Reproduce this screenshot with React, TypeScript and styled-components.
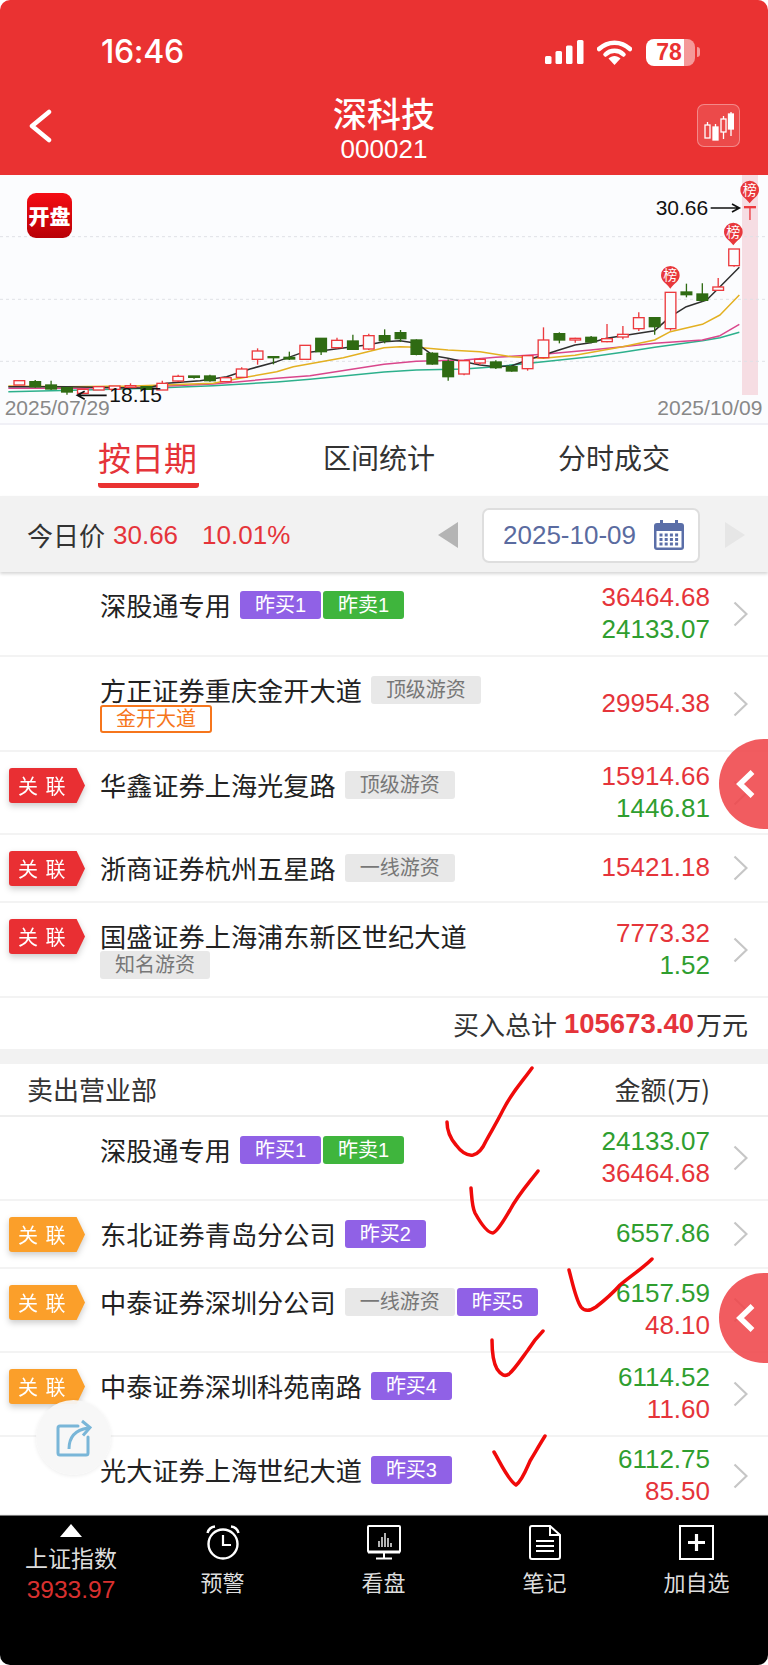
import React from "react";
import styled, { createGlobalStyle } from "styled-components";

const RED = "#e5343a";
const GREEN = "#2f9e2f";
const CJK = `"Noto Sans CJK SC", sans-serif`;
const MIX = `"Liberation Sans", "Noto Sans CJK SC", sans-serif`;

const Global = createGlobalStyle`
  html, body { margin: 0; padding: 0; background: #fff; }
  * { box-sizing: border-box; }
`;

const Page = styled.div`
  position: relative;
  width: 768px;
  height: 1665px;
  overflow: hidden;
  border-radius: 10px;
  display: flex;
  flex-direction: column;
  background: #fff;
  font-family: ${MIX};
  color: #222;
`;

const Header = styled.header`
  flex: none;
  height: 175px;
  background: #ea3232;
  color: #fff;
  position: relative;
  display: flex;
  flex-direction: column;
`;
const StatusBar = styled.div`
  height: 100px;
  padding: 35px 68px 0 101px;
  display: flex;
  align-items: flex-start;
`;
const Time = styled.div`
  font: 500 32px/34px Inter, sans-serif;
  letter-spacing: -0.3px;
  flex: 1;
`;
const StatusIcons = styled.div`
  display: flex;
  align-items: center;
  height: 34px;
`;
const WifiIcon = styled.svg`
  margin-left: 13px;
`;
const Battery = styled.div`
  width: 49px;
  height: 27px;
  margin-left: 14px;
  border-radius: 8px;
  background: linear-gradient(90deg, #fff 0 78%, rgba(255, 255, 255, 0.5) 78% 100%);
  color: #ea3232;
  font: 700 23px/27px "Liberation Sans", sans-serif;
  text-align: center;
  padding-right: 3px;
`;
const BatteryNub = styled.div`
  width: 3px;
  height: 10px;
  margin-left: 2px;
  border-radius: 0 3px 3px 0;
  background: rgba(255, 255, 255, 0.5);
`;
const NavBar = styled.div`
  flex: 1;
  display: grid;
  grid-template-columns: 100px 1fr 100px;
  align-items: start;
`;
const BackCell = styled.div`
  padding: 9px 0 0 28px;
`;
const TitleCell = styled.div`
  text-align: center;
  margin-top: -6px;
`;
const Title = styled.div`
  font: 500 34px/38px ${CJK};
`;
const Code = styled.div`
  font: 400 26px/30px "Liberation Sans", sans-serif;
  margin-top: 2px;
`;
const KButton = styled.div`
  width: 43px;
  height: 43px;
  margin: 4px 0 0 29px;
  border-radius: 7px;
  background: rgba(255, 255, 255, 0.12);
  border: 1px solid rgba(255, 255, 255, 0.35);
  display: flex;
  align-items: center;
  justify-content: center;
`;

const ChartBox = styled.section`
  position: relative;
  flex: none;
  height: 248px;
  background: #fbfcfe;
`;
const ChartSvg = styled.svg`
  display: block;
  width: 768px;
  height: 248px;
`;
const Logo = styled.div`
  position: absolute;
  left: 27px;
  top: 18px;
  width: 45px;
  height: 45px;
  border-radius: 9px;
  background: linear-gradient(180deg, #f50d14, #b80006);
  color: #fff;
  font: 900 21px/45px ${CJK};
  text-align: center;
`;

const Tabs = styled.nav`
  flex: none;
  height: 73px;
  border-top: 2px solid #f0f0f6;
  padding-left: 98px;
  display: grid;
  grid-template-columns: 225px 235px 1fr;
  background: #fff;
`;
const Tab = styled.div<{ $active?: boolean }>`
  justify-self: start;
  height: ${(p) => (p.$active ? 63 : 65)}px;
  padding-top: ${(p) => (p.$active ? 9 : 11)}px;
  font: 400 ${(p) => (p.$active ? 33 : 28)}px/${(p) => (p.$active ? 46 : 42)}px ${CJK};
  color: ${(p) => (p.$active ? RED : "#333")};
  border-bottom: ${(p) => (p.$active ? `5px solid #ea3232` : "0")};
  border-radius: 3px;
  width: ${(p) => (p.$active ? "101px" : "auto")};
`;

const DateBar = styled.div`
  position: relative;
  z-index: 2;
  flex: none;
  height: 76px;
  background: #f2f2f2;
  box-shadow: 0 2px 3px rgba(0, 0, 0, 0.16);
  display: flex;
  align-items: center;
  padding: 2px 23px 0 27px;
  font-size: 26px;
  color: #333;
`;
const TodayLabel = styled.span`
  font-family: ${CJK};
  line-height: 34px;
`;
const TodayValue = styled.span<{ $gap: number }>`
  color: ${RED};
  margin-left: ${(p) => p.$gap}px;
`;
const Spacer = styled.div`
  flex: 1;
`;
const DateBox = styled.div`
  width: 218px;
  height: 55px;
  margin: 0 25px 0 24px;
  background: #fff;
  border: 2px solid #dedede;
  border-radius: 7px;
  padding: 0 14px 0 19px;
  display: flex;
  align-items: center;
  justify-content: space-between;
  color: #5a6ba0;
`;

const Section = styled.section`
  flex: none;
  background: #fff;
`;
const Row = styled.div<{ $h: number }>`
  height: ${(p) => p.$h}px;
  padding: 0 20px 0 9px;
  border-bottom: 2px solid #f3f3f3;
  display: flex;
  align-items: stretch;
  background: #fff;
`;
const RowMain = styled.div`
  flex: none;
  width: 561px;
  padding-top: 18px;
  display: flex;
  align-items: flex-start;
`;
const BadgeSlot = styled.div`
  flex: none;
  width: 91px;
  height: 30px;
  filter: drop-shadow(0 3px 3px rgba(0, 0, 0, 0.2));
`;
const Badge = styled.div<{ $kind: "red" | "orange" }>`
  width: 76px;
  height: 35px;
  margin-top: -2px;
  padding-left: 9px;
  border-radius: 3px 0 0 3px;
  clip-path: polygon(0 0, 89% 0, 100% 50%, 89% 100%, 0 100%);
  background: ${(p) => (p.$kind === "red" ? "#e92f33" : "#fb9f2a")};
  color: #fff;
  font: 400 20px/35px ${CJK};
  word-spacing: 3px;
  white-space: nowrap;
`;
const NameWrap = styled.div`
  flex: none;
  width: 470px;
  display: flex;
  flex-wrap: wrap;
  align-items: center;
  column-gap: 2px;
`;
const Name = styled.span`
  font: 400 26.2px/30px ${CJK};
  color: #222;
  margin-right: 7px;
  white-space: nowrap;
`;
const Tag = styled.span<{ $kind: "grey" | "purple" | "green" | "outline" }>`
  height: 28px;
  padding: 0 ${(p) => (p.$kind === "outline" ? 14 : 15)}px;
  border-radius: 3px;
  font: 400 20px/${(p) => (p.$kind === "outline" ? 24 : 28)}px ${MIX};
  white-space: nowrap;
  background: ${(p) =>
    p.$kind === "grey" ? "#e8e8e8" : p.$kind === "purple" ? "#9061e6" : p.$kind === "green" ? "#3fb53d" : "transparent"};
  color: ${(p) => (p.$kind === "grey" ? "#777" : p.$kind === "outline" ? "#f6761c" : "#fff")};
  border: ${(p) => (p.$kind === "outline" ? "2px solid #f6761c" : "0")};
`;
const Amounts = styled.div`
  flex: 1;
  display: flex;
  flex-direction: column;
  justify-content: center;
  align-items: flex-end;
  padding-bottom: 2px;
  font: 400 26px/32px "Liberation Sans", sans-serif;
`;
const Amount = styled.div<{ $c: "r" | "g" }>`
  color: ${(p) => (p.$c === "r" ? RED : GREEN)};
`;
const ChevronCell = styled.div`
  flex: none;
  width: 38px;
  display: flex;
  align-items: center;
  justify-content: flex-end;
`;

const TotalRow = styled.div`
  height: 51px;
  padding-right: 20px;
  display: flex;
  align-items: center;
  justify-content: flex-end;
  font: 400 26px/34px ${CJK};
  color: #333;
`;
const TotalValue = styled.b`
  font: 700 27.5px/34px "Liberation Sans", sans-serif;
  color: ${RED};
  margin: 0 2px 0 7px;
`;
const Gap = styled.div`
  height: 15px;
  background: #f2f2f2;
`;
const SellHead = styled.div`
  height: 53px;
  padding: 0 58px 2px 27px;
  border-bottom: 2px solid #eeeeee;
  display: flex;
  justify-content: space-between;
  align-items: center;
  font: 400 26px/34px ${CJK};
  color: #333;
`;

const BottomBar = styled.footer`
  position: relative;
  z-index: 1;
  flex: 1;
  background: #000;
  display: grid;
  grid-template-columns: 142px 161px 161px 161px 143px;
  border-top: 1px solid #777;
  margin-top: -1px;
`;
const IndexCell = styled.div`
  display: flex;
  flex-direction: column;
  align-items: center;
  padding-top: 8px;
`;
const Triangle = styled.div`
  width: 0;
  height: 0;
  border-left: 11.5px solid transparent;
  border-right: 11.5px solid transparent;
  border-bottom: 13px solid #fff;
`;
const IndexName = styled.div`
  margin-top: 3px;
  font: 400 23px/34px ${CJK};
  color: #ddd;
`;
const IndexValue = styled.div`
  font: 400 24.5px/30px "Liberation Sans", sans-serif;
  color: #d8302f;
  margin-top: 1px;
`;
const BarItem = styled.div`
  display: flex;
  flex-direction: column;
  align-items: center;
  padding-top: 9px;
`;
const BarLabel = styled.div`
  margin-top: 5px;
  font: 400 22px/32px ${CJK};
  color: #ddd;
`;

const SideTab = styled.div<{ $top: number }>`
  position: absolute;
  z-index: 5;
  right: 0;
  top: ${(p) => p.$top}px;
  width: 49px;
  height: 90px;
  border-radius: 45px 0 0 45px / 45px 0 0 45px;
  background: rgba(239, 70, 74, 0.88);
  display: flex;
  align-items: center;
  padding-left: 17px;
`;
const ShareButton = styled.div`
  position: absolute;
  z-index: 5;
  left: 36px;
  top: 1400px;
  width: 75px;
  height: 75px;
  border-radius: 50%;
  background: rgba(247, 247, 247, 0.94);
  box-shadow: 0 1px 4px rgba(0, 0, 0, 0.08);
  display: flex;
  align-items: center;
  justify-content: center;
`;
const Scribbles = styled.svg`
  position: absolute;
  z-index: 6;
  left: 0;
  top: 0;
  pointer-events: none;
`;

type C = [number, "r" | "g", number, number, number, number];
// index, colour, wick top, body top, body bottom, wick bottom (in 3x chart units)
const CANDLES: C[] = [
  [0, "r", 632, 632, 645, 645], [1, "g", 630, 635, 650, 653], [2, "g", 632, 645, 657, 660], [3, "g", 650, 653, 666, 674],
  [4, "r", 658, 658, 670, 670], [5, "r", 650, 650, 660, 660], [6, "r", 648, 648, 658, 658], [7, "r", 640, 647, 652, 652],
  [8, "g", 650, 650, 658, 658], [9, "r", 632, 640, 660, 660], [10, "r", 614, 619, 633, 636], [11, "g", 618, 618, 622, 626],
  [12, "g", 614, 618, 632, 635], [13, "r", 623, 623, 635, 635], [14, "r", 592, 597, 622, 622], [15, "r", 535, 543, 568, 584],
  [16, "g", 560, 560, 563, 583], [17, "g", 545, 562, 567, 570], [18, "r", 526, 526, 568, 568], [19, "g", 505, 505, 545, 555],
  [20, "r", 503, 511, 533, 536], [21, "g", 494, 513, 538, 540], [22, "r", 491, 497, 537, 540], [23, "g", 478, 497, 512, 520],
  [24, "g", 480, 488, 506, 516], [25, "g", 508, 510, 553, 556], [26, "g", 547, 550, 582, 584], [27, "g", 568, 575, 620, 632],
  [28, "r", 572, 572, 612, 616], [29, "r", 564, 568, 579, 585], [30, "g", 571, 576, 593, 597], [31, "g", 587, 590, 603, 605],
  [32, "r", 555, 557, 596, 602], [33, "r", 472, 510, 563, 565], [34, "g", 487, 491, 510, 520], [35, "r", 503, 505, 510, 518],
  [36, "g", 498, 502, 516, 520], [37, "r", 462, 506, 515, 517], [38, "r", 468, 493, 501, 508], [39, "r", 427, 443, 476, 483],
  [40, "g", 443, 443, 470, 494], [41, "r", 367, 367, 476, 482], [42, "g", 341, 366, 374, 382], [43, "g", 340, 372, 391, 395],
  [44, "r", 324, 351, 361, 363], [45, "r", 237, 237, 287, 290], [46, "r", 110, 110, 113, 150],
];
const cx = (i: number) => 58 + i * 47.65;

const LINES: { color: string; d: string }[] = [
  { color: "#2db08c", d: "25,665 250,660 450,655 640,647 830,636 930,628 1152,606 1249,600 1392,597 1487,590 1630,575 1772,560 1868,547 1964,532 2107,512 2160,503 2218,487" },
  { color: "#d9468c", d: "25,655 250,655 450,650 640,642 830,625 930,617 1152,583 1249,574 1392,570 1487,562 1630,553 1772,540 1868,530 1964,520 2107,510 2160,497 2218,463" },
  { color: "#e3b021", d: "25,648 200,650 400,648 640,640 720,625 830,605 880,590 1030,563 1152,533 1200,530 1249,532 1344,540 1440,545 1534,560 1630,565 1725,556 1868,530 1964,510 2011,485 2107,463 2160,435 2218,375" },
  { color: "#2f2f2f", d: "25,650 200,650 440,655 500,640 600,632 680,620 750,597 830,575 900,550 960,543 1100,525 1152,515 1200,512 1250,520 1300,557 1344,565 1392,575 1440,585 1487,590 1534,588 1582,570 1630,555 1677,540 1725,525 1772,518 1820,505 1868,497 1916,490 1964,482 2011,440 2059,410 2120,390 2160,350 2218,292" },
];

const Pin = ({ x, y }: { x: number; y: number }) => (
  <g>
    <path d={`M${x - 28} ${y}a28 28 0 0 1 56 0c0 18-16 24-28 40c-12-16-28-22-28-40z`} fill="#e8383c" />
    <text x={x} y={y + 15} textAnchor="middle" fontSize="42" fill="#fff" fontFamily={CJK}>榜</text>
  </g>
);

const Chart = () => (
  <ChartSvg viewBox="0 15 2304 744">
    <rect x="2226" y="15" width="48" height="660" fill="#f6dde3" />
    {[200, 388, 574].map((y) => (
      <line key={y} x1="0" x2="2304" y1={y} y2={y} stroke="#dfe1e6" strokeWidth="3" strokeDasharray="9 9" />
    ))}
    {LINES.map((l) => (
      <polyline key={l.color} points={l.d} fill="none" stroke={l.color} strokeWidth="4.5" strokeLinejoin="round" />
    ))}
    {CANDLES.map(([i, c, wt, bt, bb, wb]) => {
      const x = cx(i);
      const col = c === "r" ? "#ec3a3e" : "#2f6b13";
      return (
        <g key={i}>
          <line x1={x} x2={x} y1={wt} y2={bt} stroke={col} strokeWidth="4" />
          <line x1={x} x2={x} y1={bb} y2={wb} stroke={col} strokeWidth="4" />
          <rect
            x={x - 16}
            y={bt}
            width="32"
            height={Math.max(bb - bt, 3)}
            fill={c === "r" ? "#fbfcfe" : col}
            stroke={col}
            strokeWidth="4"
          />
        </g>
      );
    })}
    <Pin x={2249} y={60} />
    <Pin x={2200} y={186} />
    <Pin x={2011} y={316} />
    <g fontFamily="'Liberation Sans', sans-serif">
      <text x="1967" y="134" fontSize="63" fill="#111">30.66</text>
      <text x="328" y="696" fontSize="63" fill="#111">18.15</text>
      <text x="14" y="736" fontSize="63" fill="#888">2025/07/29</text>
      <text x="1972" y="736" fontSize="63" fill="#888">2025/10/09</text>
    </g>
    <path d="M2132 114h84M2196 102l22 12l-22 12" fill="none" stroke="#111" strokeWidth="5" />
    <path d="M320 676h-86M254 664l-22 12l22 12" fill="none" stroke="#111" strokeWidth="5" />
  </ChartSvg>
);

const Chevron = () => (
  <svg width="15" height="26" viewBox="0 0 15 26">
    <path d="M1.5 1.5L13.5 13L1.5 24.5" fill="none" stroke="#c6c6c6" strokeWidth="2.2" />
  </svg>
);

type TagDef = [string, "grey" | "purple" | "green" | "outline"];
type RowDef = {
  h: number;
  badge?: "red" | "orange";
  name: string;
  tags?: TagDef[];
  amounts: [string, "r" | "g"][];
};

const BUY: RowDef[] = [
  { h: 85, name: "深股通专用", tags: [["昨买1", "purple"], ["昨卖1", "green"]], amounts: [["36464.68", "r"], ["24133.07", "g"]] },
  { h: 95, name: "方正证券重庆金开大道", tags: [["顶级游资", "grey"], ["金开大道", "outline"]], amounts: [["29954.38", "r"]] },
  { h: 83, badge: "red", name: "华鑫证券上海光复路", tags: [["顶级游资", "grey"]], amounts: [["15914.66", "r"], ["1446.81", "g"]] },
  { h: 68, badge: "red", name: "浙商证券杭州五星路", tags: [["一线游资", "grey"]], amounts: [["15421.18", "r"]] },
  { h: 95, badge: "red", name: "国盛证券上海浦东新区世纪大道", tags: [["知名游资", "grey"]], amounts: [["7773.32", "r"], ["1.52", "g"]] },
];
const SELL: RowDef[] = [
  { h: 84, name: "深股通专用", tags: [["昨买1", "purple"], ["昨卖1", "green"]], amounts: [["24133.07", "g"], ["36464.68", "r"]] },
  { h: 68, badge: "orange", name: "东北证券青岛分公司", tags: [["昨买2", "purple"]], amounts: [["6557.86", "g"]] },
  { h: 84, badge: "orange", name: "中泰证券深圳分公司", tags: [["一线游资", "grey"], ["昨买5", "purple"]], amounts: [["6157.59", "g"], ["48.10", "r"]] },
  { h: 84, badge: "orange", name: "中泰证券深圳科苑南路", tags: [["昨买4", "purple"]], amounts: [["6114.52", "g"], ["11.60", "r"]] },
  { h: 79, name: "光大证券上海世纪大道", tags: [["昨买3", "purple"]], amounts: [["6112.75", "g"], ["85.50", "r"]] },
];

const ListRow = ({ r }: { r: RowDef }) => (
  <Row $h={r.h}>
    <RowMain>
      <BadgeSlot>{r.badge && <Badge $kind={r.badge}>关 联</Badge>}</BadgeSlot>
      <NameWrap>
        <Name>{r.name}</Name>
        {r.tags?.map(([t, k]) => (
          <Tag key={t} $kind={k}>{t}</Tag>
        ))}
      </NameWrap>
    </RowMain>
    <Amounts>
      {r.amounts.map(([a, c]) => (
        <Amount key={a} $c={c}>{a}</Amount>
      ))}
    </Amounts>
    <ChevronCell>
      <Chevron />
    </ChevronCell>
  </Row>
);

const ic = { fill: "none", stroke: "#fff", strokeWidth: 2 };

const SideChevron = () => (
  <svg width="20" height="28" viewBox="0 0 20 28">
    <path d="M16.5 2L4 14L16.5 26" fill="none" stroke="#fff" strokeWidth="5.5" />
  </svg>
);

export default function App() {
  return (
    <Page>
      <Global />
      <Header>
        <StatusBar>
          <Time>16:46</Time>
          <StatusIcons>
            <svg width="39" height="24" viewBox="0 0 39 24" fill="#fff">
              <rect x="0" y="16" width="6.5" height="8" rx="1.5" />
              <rect x="10.5" y="11" width="6.5" height="13" rx="1.5" />
              <rect x="21" y="5.5" width="6.5" height="18.5" rx="1.5" />
              <rect x="32" y="0" width="6.5" height="24" rx="1.5" />
            </svg>
            <WifiIcon width="35" height="25" viewBox="0 0 35 25">
              <path d="M2 9C11 0.5 24 0.5 33 9" fill="none" stroke="#fff" strokeWidth="4.5" strokeLinecap="round" />
              <path d="M8.5 14.5C13.5 9.5 21.5 9.5 26.5 14.5" fill="none" stroke="#fff" strokeWidth="4.5" strokeLinecap="round" />
              <path d="M11.5 18.5C15 15 20 15 23.5 18.5L17.5 25z" fill="#fff" />
            </WifiIcon>
            <Battery>78</Battery>
            <BatteryNub />
          </StatusIcons>
        </StatusBar>
        <NavBar>
          <BackCell>
            <svg width="24" height="34" viewBox="0 0 24 34">
              <path d="M21 3L4 17L21 31" fill="none" stroke="#fff" strokeWidth="4.5" strokeLinecap="round" strokeLinejoin="round" />
            </svg>
          </BackCell>
          <TitleCell>
            <Title>深科技</Title>
            <Code>000021</Code>
          </TitleCell>
          <KButton>
            <svg width="30" height="30" viewBox="0 0 30 30" fill="none" stroke="#fff" strokeWidth="1.3">
              <rect x="1" y="14" width="5" height="13" />
              <rect x="9" y="16" width="5" height="13" fill="#fff" />
              <path d="M3.5 11v3M11.5 13v3M19.5 5v3M19.5 21v7M27 1v3M27 18v7" />
              <rect x="17" y="8" width="5" height="13" />
              <rect x="24.5" y="3" width="5" height="15" fill="#fff" />
            </svg>
          </KButton>
        </NavBar>
      </Header>

      <ChartBox>
        <Chart />
        <Logo>开盘</Logo>
      </ChartBox>

      <Tabs>
        <Tab $active>按日期</Tab>
        <Tab>区间统计</Tab>
        <Tab>分时成交</Tab>
      </Tabs>

      <DateBar>
        <TodayLabel>今日价</TodayLabel>
        <TodayValue $gap={8}>30.66</TodayValue>
        <TodayValue $gap={24}>10.01%</TodayValue>
        <Spacer />
        <svg width="20" height="26" viewBox="0 0 20 26"><path d="M20 0V26L0 13z" fill="#b4b4b4" /></svg>
        <DateBox>
          2025-10-09
          <svg width="30" height="30" viewBox="0 0 30 30">
            <rect x="0" y="3" width="30" height="27" rx="3" fill="#5a6ea8" />
            <rect x="2.5" y="11" width="25" height="16.5" fill="#fff" />
            <rect x="6" y="0" width="3" height="7" fill="#5a6ea8" />
            <rect x="21" y="0" width="3" height="7" fill="#5a6ea8" />
            {[0, 1, 2].map((r) =>
              [0, 1, 2, 3].map((c) => (
                <rect key={`${r}${c}`} x={5.5 + c * 5.2} y={13.5 + r * 4.5} width="3" height="3" fill="#5a6ea8" />
              )),
            )}
          </svg>
        </DateBox>
        <svg width="20" height="26" viewBox="0 0 20 26"><path d="M0 0V26L20 13z" fill="#e6e6e6" /></svg>
      </DateBar>

      <Section>
        {BUY.map((r) => (
          <ListRow key={r.name} r={r} />
        ))}
        <TotalRow>
          买入总计<TotalValue>105673.40</TotalValue>万元
        </TotalRow>
        <Gap />
        <SellHead>
          <span>卖出营业部</span>
          <span>金额(万)</span>
        </SellHead>
        {SELL.map((r) => (
          <ListRow key={r.name + "s"} r={r} />
        ))}
      </Section>

      <BottomBar>
        <IndexCell>
          <Triangle />
          <IndexName>上证指数</IndexName>
          <IndexValue>3933.97</IndexValue>
        </IndexCell>
        <BarItem>
          <svg width="34" height="35" viewBox="0 0 34 35" {...ic}>
            <circle cx="17" cy="19" r="14.5" strokeWidth="2.4" />
            <path d="M17 10v10h8" strokeWidth="2.2" />
            <path d="M1.5 8C2.5 4 5 2 9 1.5M32.5 8C31.5 4 29 2 25 1.5" strokeWidth="2.4" />
          </svg>
          <BarLabel>预警</BarLabel>
        </BarItem>
        <BarItem>
          <svg width="34" height="35" viewBox="0 0 34 35" {...ic}>
            <rect x="1" y="1" width="32" height="26" rx="1" strokeWidth="2" />
            <path d="M1 27h32" strokeWidth="3" />
            <path d="M12 22v-6M15 22v-10M18 22v-14M21 22v-9M24 22v-4" strokeWidth="1.4" />
            <path d="M17 28v5M9 33.5h16" strokeWidth="2" />
          </svg>
          <BarLabel>看盘</BarLabel>
        </BarItem>
        <BarItem>
          <svg width="32" height="35" viewBox="0 0 32 35" {...ic}>
            <path d="M3 1h18l10 9v22a2 2 0 0 1-2 2H3a2 2 0 0 1-2-2V3a2 2 0 0 1 2-2z" />
            <path d="M21 1v9h10" />
            <path d="M7 16h18M7 21h18M7 26h18" />
          </svg>
          <BarLabel>笔记</BarLabel>
        </BarItem>
        <BarItem>
          <svg width="35" height="35" viewBox="0 0 35 35" {...ic}>
            <rect x="1" y="1" width="33" height="33" />
            <path d="M17.5 9v17M9 17.5h17" strokeWidth="3.2" />
          </svg>
          <BarLabel>加自选</BarLabel>
        </BarItem>
      </BottomBar>

      <SideTab $top={739}>
        <SideChevron />
      </SideTab>
      <SideTab $top={1273}>
        <SideChevron />
      </SideTab>
      <ShareButton>
        <svg width="36" height="38" viewBox="0 0 36 38" fill="none" stroke="#79b6d8" strokeWidth="3">
          <path d="M22 7H4a2 2 0 0 0-2 2v25a2 2 0 0 0 2 2h26a2 2 0 0 0 2-2V18" strokeLinecap="round" />
          <path d="M13 30c0-11 6-19 19-21" />
          <path d="M26 2l8 6.5l-7 8" />
        </svg>
      </ShareButton>

      <Scribbles width="768" height="1665" viewBox="0 0 768 1665" fill="none" stroke="#f00a0a" strokeWidth="3.5" strokeLinecap="round" strokeLinejoin="round">
        <path d="M447 1122C447 1132 450 1138 456 1145C462 1153 467 1156 473 1155C478 1154 482 1150 486 1141C492 1130 497 1122 503 1110C512 1092 522 1082 532 1068" />
        <path d="M471 1188C472 1200 472 1207 475 1213C480 1222 487 1233 493 1233C498 1231 504 1220 510 1210C518 1195 528 1184 538 1171" />
        <path d="M569 1270C573 1285 576 1300 581 1307C585 1312 590 1311 596 1307C605 1300 612 1294 620 1285C632 1275 643 1268 652 1259" />
        <path d="M492 1340C492 1352 493 1362 497 1369C501 1375 505 1377 509 1374C515 1369 522 1358 528 1350C533 1342 538 1336 543 1331" />
        <path d="M494 1452C500 1462 508 1480 516 1485C522 1481 526 1470 530 1461C536 1451 540 1444 545 1436" />
      </Scribbles>
    </Page>
  );
}
